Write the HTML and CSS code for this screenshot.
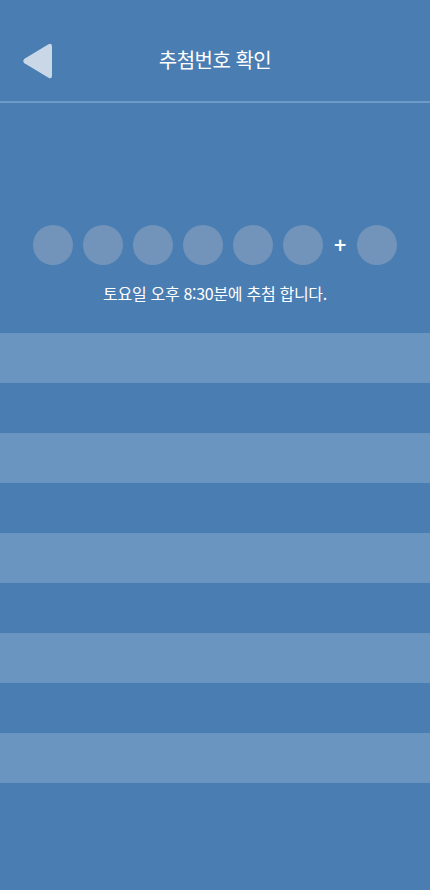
FILE: index.html
```html
<!DOCTYPE html>
<html lang="ko">
<head>
<meta charset="utf-8">
<link rel="stylesheet" href="styles.css">
</head>
<body>
<div class="page">
  <header class="header">
    <button class="back" aria-label="뒤로">
      <svg width="32" height="36" viewBox="0 0 32 36"><path d="M2.5 20.3 Q0 18 2.5 15.7 L26.5 1.2 Q30 -0.5 30 3.5 L30 32.5 Q30 36.5 26.5 34.8 Z" fill="#c9d7e7"/></svg>
    </button>
    <h1 class="title">추첨번호 확인</h1>
  </header>
  <section class="draw">
    <div class="balls">
      <span class="ball"></span>
      <span class="ball"></span>
      <span class="ball"></span>
      <span class="ball"></span>
      <span class="ball"></span>
      <span class="ball"></span>
      <span class="plus">+</span>
      <span class="ball"></span>
    </div>
    <p class="note">토요일 오후 8:30분에 추첨 합니다.</p>
  </section>
  <ul class="rows">
    <li class="row light"></li>
    <li class="row"></li>
    <li class="row light"></li>
    <li class="row"></li>
    <li class="row light"></li>
    <li class="row"></li>
    <li class="row light"></li>
    <li class="row"></li>
    <li class="row light"></li>
  </ul>
</div>
</body>
</html>
```
FILE: styles.css
```css
* { box-sizing: border-box; }
html, body {
  margin: 0;
  padding: 0;
  background: #4a7db2;
  width: 430px;
  height: 890px;
  overflow: hidden;
  font-family: "Noto Sans CJK KR", "Noto Sans", sans-serif;
  color: #ffffff;
}
.page { display: flex; flex-direction: column; }
.header {
  position: relative;
  height: 103px;
  padding-top: 18px;
  border-bottom: 2px solid #6f9bc8;
  display: flex;
  align-items: center;
  justify-content: center;
}
.back {
  position: absolute;
  left: 22px;
  top: 43px;
  padding: 0;
  border: 0;
  background: none;
  width: 32px;
  height: 36px;
  display: flex;
}
.title {
  margin: 0;
  font-size: 20px;
  font-weight: 400;
  letter-spacing: -0.5px;
}
.draw {
  padding-top: 122px;
  height: 230px;
  display: flex;
  flex-direction: column;
  align-items: center;
}
.balls {
  display: flex;
  align-items: center;
  gap: 10px;
  height: 40px;
}
.ball {
  width: 40px;
  height: 40px;
  border-radius: 50%;
  background: #7294ba;
}
.plus {
  width: 14px;
  text-align: center;
  font-family: "DejaVu Sans", sans-serif;
  font-weight: 700;
  font-size: 17px;
  line-height: 18px;
  margin-top: -1px;
}
.note {
  margin: 16px 0 0 0;
  font-size: 16px;
  letter-spacing: -0.3px;
  line-height: 24px;
}
.rows { list-style: none; margin: 0; padding: 0; }
.row { height: 50px; }
.row.light { background: #6a95c1; }
```
